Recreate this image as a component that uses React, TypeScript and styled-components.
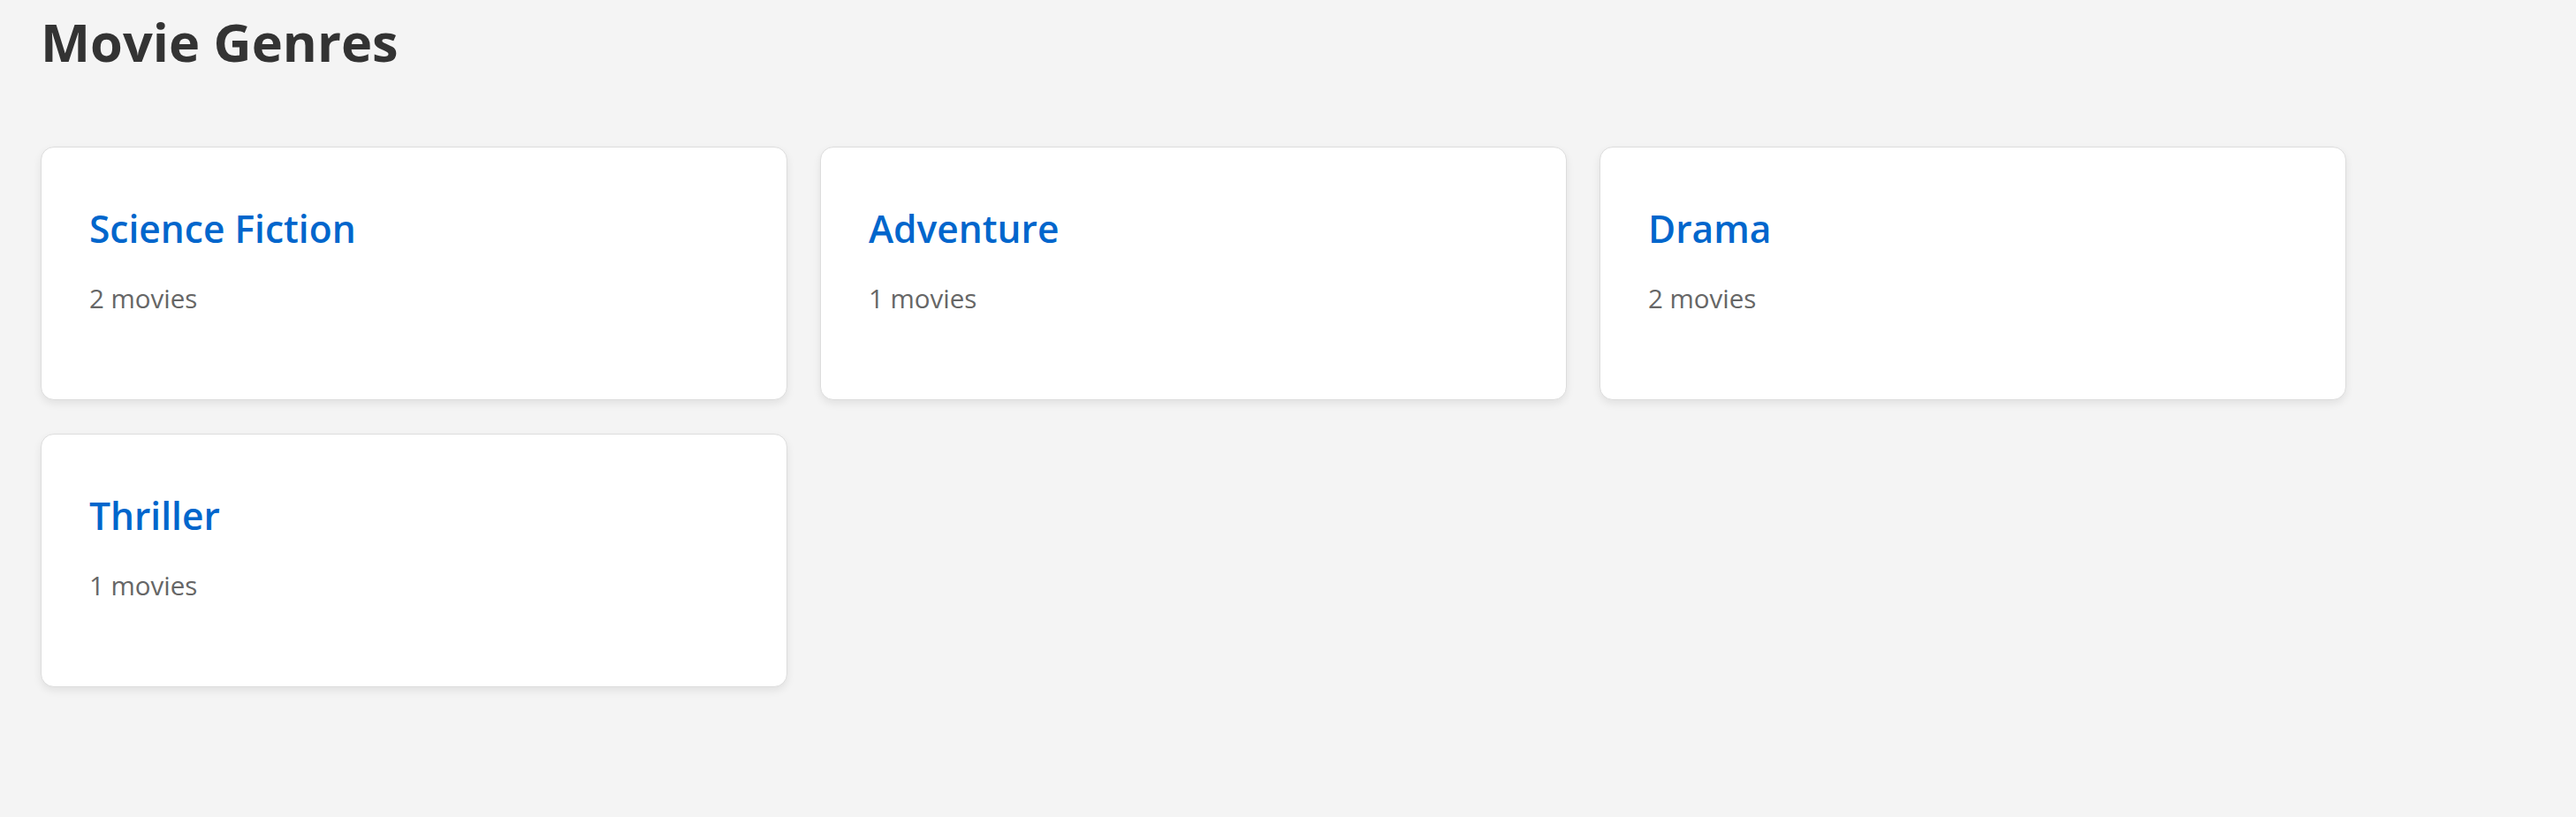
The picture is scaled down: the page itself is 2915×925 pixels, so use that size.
import React from "react";
import styled, { createGlobalStyle } from "styled-components";

const GlobalStyle = createGlobalStyle`
  html, body {
    margin: 0;
    padding: 0;
    background: #f4f4f4;
  }
  body {
    font-family: "Open Sans", "Noto Sans", "Liberation Sans", sans-serif;
  }
`;

const Page = styled.main`
  padding: 6px 46px 40px;
  min-height: 925px;
  box-sizing: border-box;
  background: #f4f4f4;
`;

const Heading = styled.h1`
  margin: 0 0 78px;
  font-size: 59.5px;
  line-height: 82px;
  font-weight: 700;
  color: #333333;
`;

const Grid = styled.div`
  display: grid;
  grid-template-columns: repeat(3, 845px);
  column-gap: 37px;
  row-gap: 38px;
`;

const Card = styled.section`
  background: #ffffff;
  border: 1px solid #dddddd;
  border-radius: 15px;
  box-shadow: 0 4px 10px rgba(0, 0, 0, 0.08);
  padding: 63px 54px 94px;
`;

const CardTitle = styled.h2`
  margin: 0 0 31px;
  font-size: 42.5px;
  line-height: 57px;
  font-weight: 600;
  color: #0066cc;
`;

const Count = styled.p`
  margin: 0;
  font-size: 29.5px;
  line-height: 40px;
  color: #666666;
`;

const genres = [
  { name: "Science Fiction", count: 2 },
  { name: "Adventure", count: 1 },
  { name: "Drama", count: 2 },
  { name: "Thriller", count: 1 },
];

export default function App() {
  return (
    <>
      <GlobalStyle />
      <Page>
        <Heading>Movie Genres</Heading>
        <Grid>
          {genres.map((g) => (
            <Card key={g.name}>
              <CardTitle>{g.name}</CardTitle>
              <Count>{g.count} movies</Count>
            </Card>
          ))}
        </Grid>
      </Page>
    </>
  );
}
